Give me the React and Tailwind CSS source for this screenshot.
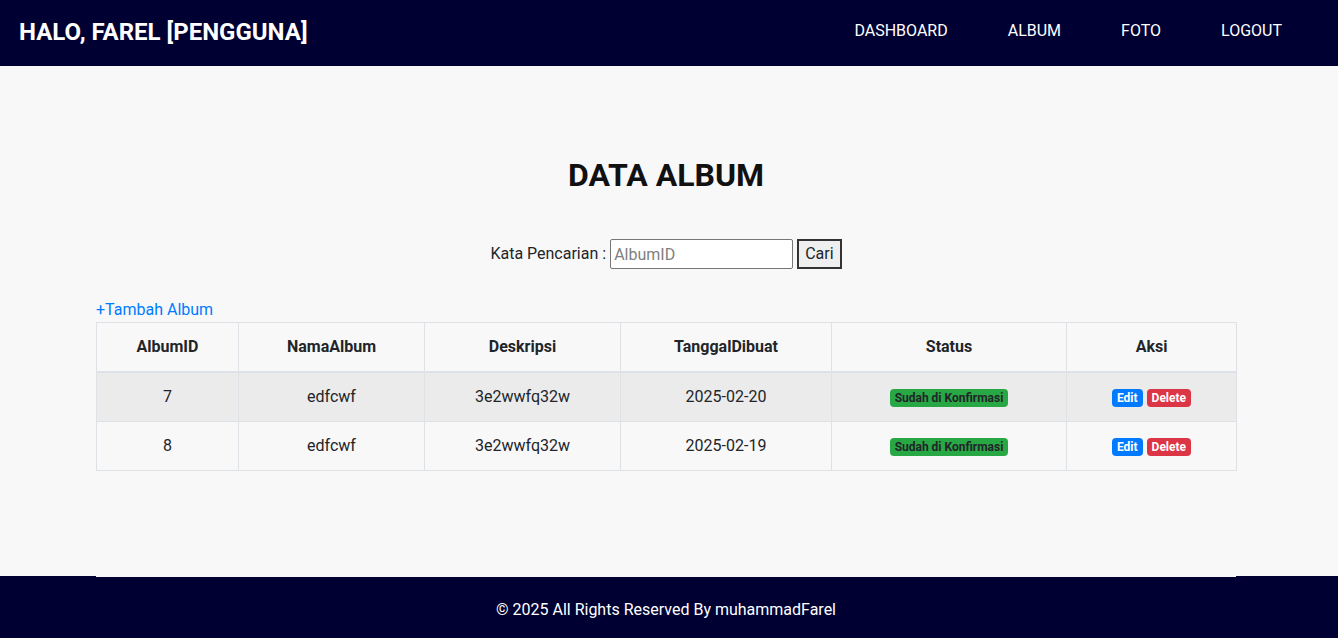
export default function App() {
    const rows = [
        { id: 7, nama: 'edfcwf', deskripsi: '3e2wwfq32w', tanggal: '2025-02-20' },
        { id: 8, nama: 'edfcwf', deskripsi: '3e2wwfq32w', tanggal: '2025-02-19' },
    ];

    return (
        <div className="min-h-screen flex flex-col bg-[#f8f8f8] text-[#212529] font-['Roboto',sans-serif]">
            {/* Header */}
            <header className="h-[66px] bg-[#000033] flex items-center justify-between pl-[19px] pr-[56px]">
                <h2 className="text-white text-[24px] font-bold leading-none pb-[2px]">HALO, FAREL [PENGGUNA]</h2>
                <nav className="flex gap-[60px] pb-[4px] text-white text-[16px]">
                    <a href="#">DASHBOARD</a>
                    <a href="#">ALBUM</a>
                    <a href="#">FOTO</a>
                    <a href="#">LOGOUT</a>
                </nav>
            </header>

            {/* Content */}
            <main className="flex-1 w-[1140px] ml-[96px]">
                <h1 className="mt-[90px] text-center text-[32px] font-bold leading-[38px] text-[#111]">DATA ALBUM</h1>

                <form className="mt-[45px] flex items-center justify-center text-[16px]" onSubmit={(e) => e.preventDefault()}>
                    <label className="mr-[4px]">Kata Pencarian :</label>
                    <input
                        type="text"
                        placeholder="AlbumID"
                        className="w-[183px] h-[30px] bg-white border border-[#767676] rounded-[2px] px-[3px] text-[16px] placeholder-[#808080] outline-none"
                    />
                    <button type="submit" className="ml-[4px] h-[30px] px-[6px] bg-[#efefef] border-2 border-[#333] text-[16px]">
                        Cari
                    </button>
                </form>

                <a href="#" className="block mt-[29px] text-[#007bff] text-[16px] leading-[24px]">+Tambah Album</a>

                <table className="w-full table-fixed border-collapse text-[16px] text-center">
                    <colgroup>
                        <col className="w-[142px]" />
                        <col className="w-[186px]" />
                        <col className="w-[196px]" />
                        <col className="w-[211px]" />
                        <col className="w-[235px]" />
                        <col className="w-[170px]" />
                    </colgroup>
                    <thead>
                        <tr>
                            {['AlbumID', 'NamaAlbum', 'Deskripsi', 'TanggalDibuat', 'Status', 'Aksi'].map((h) => (
                                <th key={h} className="border border-[#dee2e6] border-b-2 py-[12px] leading-[24px] font-bold">{h}</th>
                            ))}
                        </tr>
                    </thead>
                    <tbody>
                        {rows.map((r, i) => (
                            <tr key={r.id} className={i % 2 === 0 ? 'bg-[#ebebeb]' : ''}>
                                <td className="border border-[#dee2e6] py-[12px] leading-[24px]">{r.id}</td>
                                <td className="border border-[#dee2e6] py-[12px] leading-[24px]">{r.nama}</td>
                                <td className="border border-[#dee2e6] py-[12px] leading-[24px]">{r.deskripsi}</td>
                                <td className="border border-[#dee2e6] py-[12px] leading-[24px]">{r.tanggal}</td>
                                <td className="border border-[#dee2e6] py-[12px] leading-[24px]">
                                    <span className="inline-block bg-[#28a745] text-[#212529] text-[12px] font-bold leading-[18px] px-[5px] rounded-[4px] align-middle">
                                        Sudah di Konfirmasi
                                    </span>
                                </td>
                                <td className="border border-[#dee2e6] py-[12px] leading-[24px]">
                                    <span className="inline-flex gap-[4px] align-middle">
                                        <a href="#" className="bg-[#007bff] text-white text-[12px] font-bold leading-[18px] px-[5px] rounded-[4px]">Edit</a>
                                        <a href="#" className="bg-[#dc3545] text-white text-[12px] font-bold leading-[18px] px-[5px] rounded-[4px]">Delete</a>
                                    </span>
                                </td>
                            </tr>
                        ))}
                    </tbody>
                </table>
            </main>

            {/* Footer */}
            <footer className="h-[62px] bg-[#000033] flex flex-col">
                <div className="w-[1140px] ml-[96px] h-px bg-[#f8f8f8]" />
                <div className="flex-1 flex items-center justify-center pt-[4px] pr-[6px] text-white text-[16px]">
                    © 2025 All Rights Reserved By muhammadFarel
                </div>
            </footer>
        </div>
    );
}
